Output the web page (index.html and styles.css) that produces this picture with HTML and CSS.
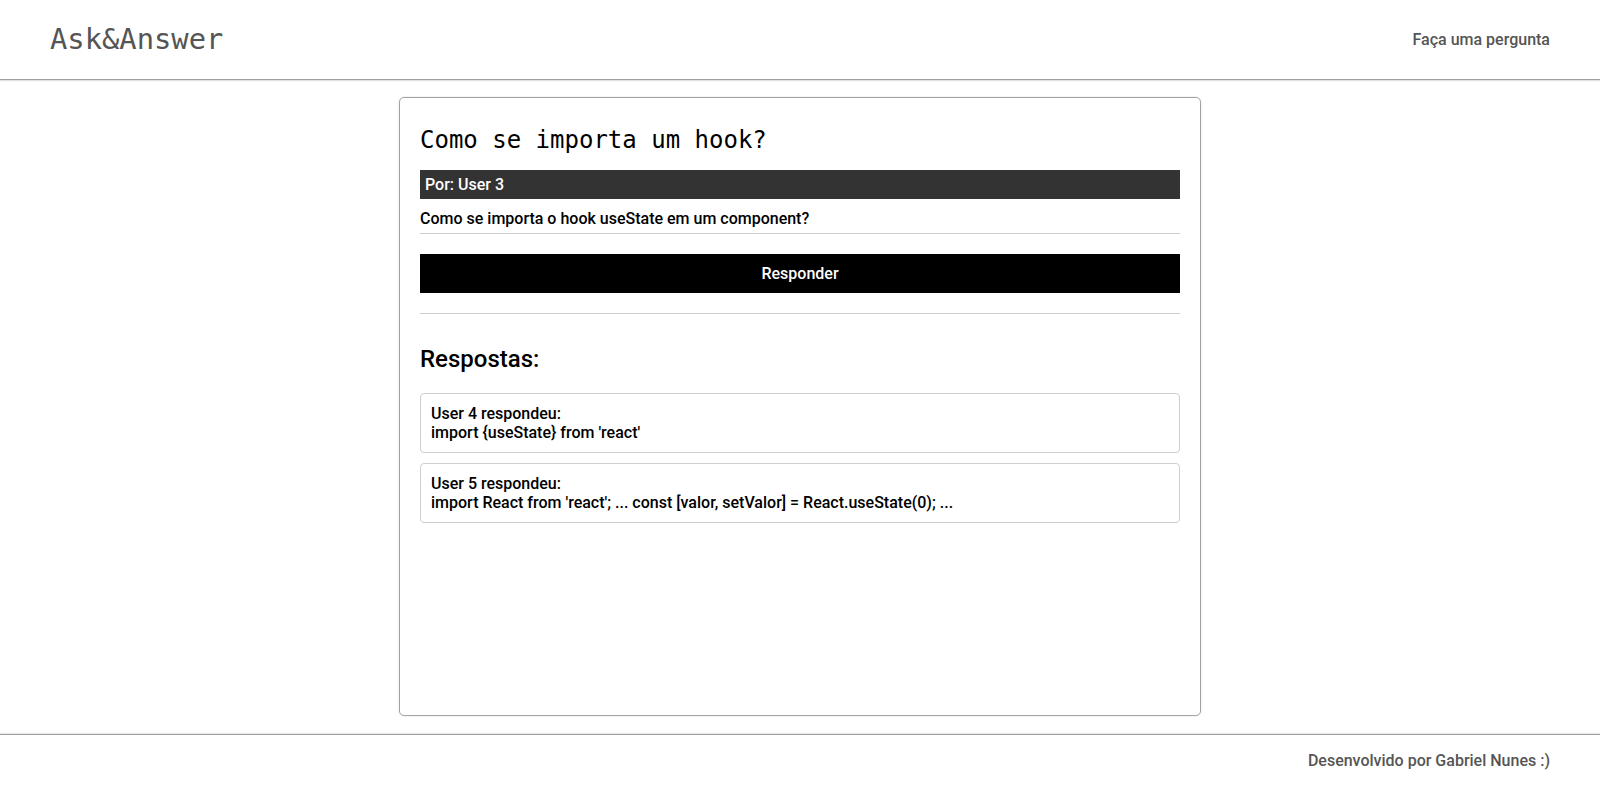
FILE: index.html
```html
<!DOCTYPE html>
<html lang="pt-BR">
<head>
<meta charset="utf-8">
<title>Ask&amp;Answer</title>
<link rel="stylesheet" href="styles.css">
</head>
<body>
<div class="page">
  <header class="topbar">
    <div class="logo">Ask&amp;Answer</div>
    <nav class="nav"><a class="nav-link" href="#">Faça uma pergunta</a></nav>
  </header>
  <main class="main">
    <section class="card">
      <h1 class="q-title">Como se importa um hook?</h1>
      <div class="q-author">Por: User 3</div>
      <p class="q-body">Como se importa o hook useState em um component?</p>
      <button class="btn-answer" type="button">Responder</button>
      <hr class="divider">
      <h2 class="answers-title">Respostas:</h2>
      <div class="answer">
        <div>User 4 respondeu:</div>
        <div>import {useState} from 'react'</div>
      </div>
      <div class="answer">
        <div>User 5 respondeu:</div>
        <div>import React from 'react'; ... const [valor, setValor] = React.useState(0); ...</div>
      </div>
    </section>
  </main>
  <footer class="footer">Desenvolvido por Gabriel Nunes :)</footer>
</div>
</body>
</html>
```

FILE: styles.css
```css
* { box-sizing: border-box; }

html, body {
  margin: 0;
  padding: 0;
  background: #fff;
}

body {
  font-family: Roboto, "Liberation Sans", sans-serif;
  font-size: 16px;
  font-weight: 500;
  color: #000;
}

.page {
  display: flex;
  flex-direction: column;
  height: 100vh;
}

.topbar {
  height: 80px;
  flex: none;
  display: flex;
  align-items: center;
  justify-content: space-between;
  padding: 0 50px 1px 50px;
  border-bottom: 1px solid #9e9e9e;
  box-shadow: 0 1px 1px rgba(0, 0, 0, 0.12);
}

.logo {
  font-family: "DejaVu Sans Mono", monospace;
  font-weight: normal;
  font-size: 28.8px;
  color: #555;
}

.nav-link {
  color: #555;
  text-decoration: none;
  font-size: 16px;
}

.main {
  flex: 1;
  display: flex;
  justify-content: center;
  padding: 17px 0 18px;
  min-height: 0;
}

.card {
  width: 802px;
  border: 1px solid #a3a3a3;
  border-radius: 5px;
  box-shadow: 0 0 2px rgba(0, 0, 0, 0.15);
  padding: 20px 20px;
  display: flex;
  flex-direction: column;
}

.q-title {
  font-family: "DejaVu Sans Mono", monospace;
  font-weight: normal;
  font-size: 24px;
  margin: 8px 0 16px;
}

.q-author {
  background: #333;
  color: #fff;
  padding: 5px 5px;
  line-height: 19px;
}

.q-body {
  margin: 0;
  padding: 10px 0 5px;
  line-height: 19px;
  border-bottom: 1px solid #cfcfcf;
}

.btn-answer {
  margin-top: 20px;
  height: 39px;
  background: #000;
  color: #fff;
  border: none;
  font-family: Roboto, "Liberation Sans", sans-serif;
  font-weight: 500;
  font-size: 16px;
}

.divider {
  margin: 20px 0 0;
  border: none;
  border-top: 1px solid #cfcfcf;
  height: 0;
}

.answers-title {
  font-weight: 500;
  font-size: 24px;
  margin: 31px 0 20px;
  line-height: 28px;
}

.answer {
  border: 1px solid #cfcfcf;
  border-radius: 4px;
  padding: 10px 10px;
  line-height: 19px;
  margin-bottom: 10px;
}

.footer {
  flex: none;
  height: 52px;
  display: flex;
  align-items: center;
  justify-content: flex-end;
  padding: 0 50px;
  border-top: 1px solid #9e9e9e;
  box-shadow: 0 -1px 1px rgba(0, 0, 0, 0.08);
  color: #555;
}
```
